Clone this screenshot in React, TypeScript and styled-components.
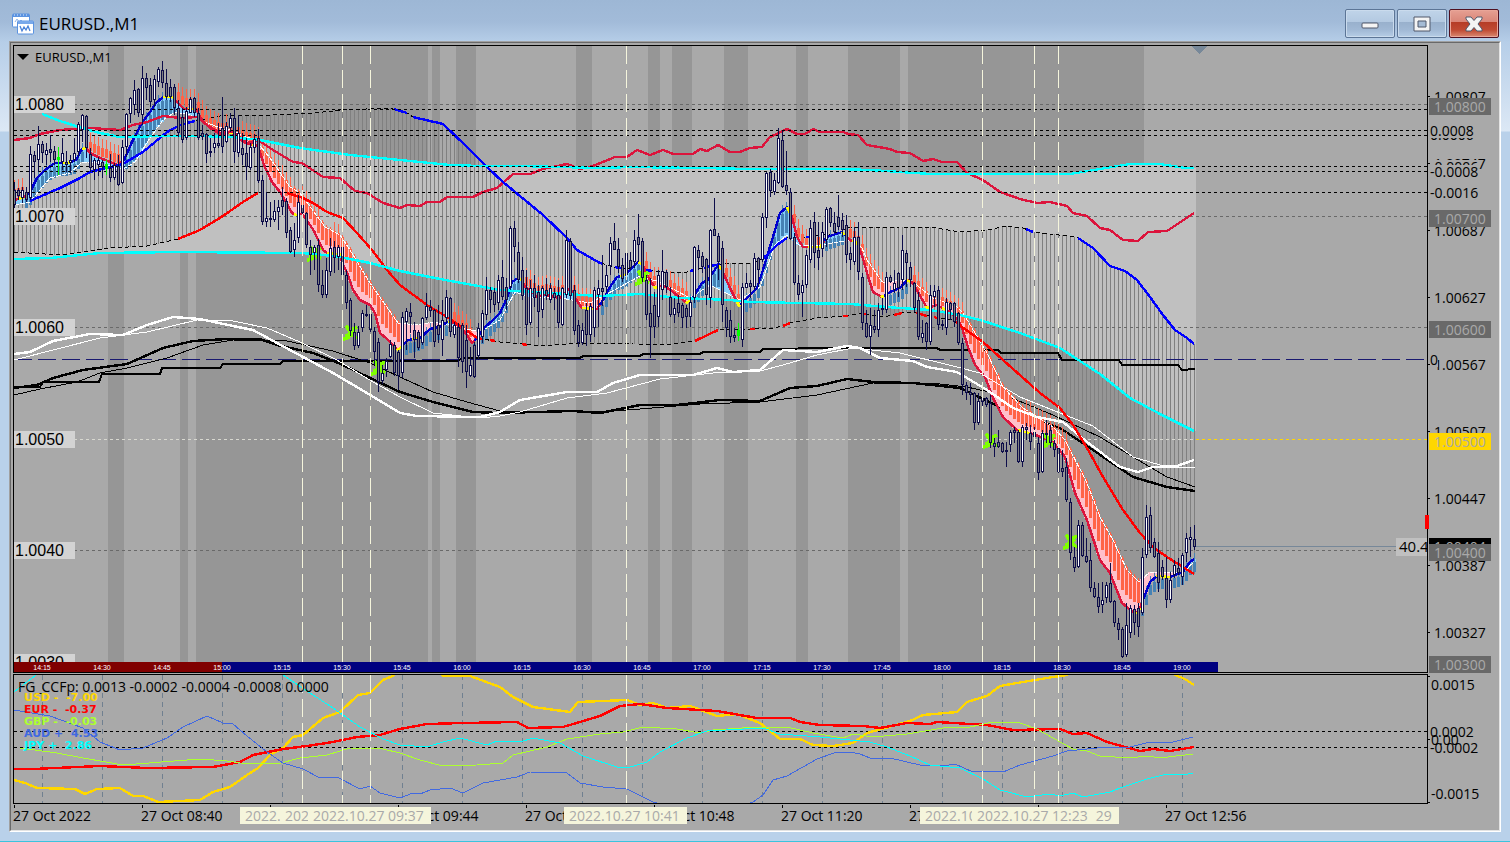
import React from "react";
import styled, { createGlobalStyle } from "styled-components";

/* ------------------------------------------------------------------ */
/* Types and chart data                                                */
/* ------------------------------------------------------------------ */

type Point = [number, number];

const parse = (s: string): Point[] =>
  s.trim().split(/\s+/).map((p) => p.split(",").map(Number) as Point);

const at = (pts: Point[], x: number): number => {
  if (x <= pts[0][0]) return pts[0][1];
  for (let i = 1; i < pts.length; i++) {
    if (x <= pts[i][0]) {
      const [x0, y0] = pts[i - 1];
      const [x1, y1] = pts[i];
      return y0 + ((y1 - y0) * (x - x0)) / (x1 - x0 || 1);
    }
  }
  return pts[pts.length - 1][1];
};

const FIRST = 14;
const STEP = 4;
const LAST = 1194;
const ORIGIN = 46;
const SUB_ORIGIN = 675;

const slice = (pts: Point[], from: number, to: number): Point[] => [
  [from, at(pts, from)],
  ...pts.filter((p) => p[0] > from && p[0] < to),
  [to, at(pts, to)],
];

const join = (pts: Point[]) => pts.map((p) => `${p[0]},${Math.round(p[1])}`).join(" ");

/* high, low, body top, body bottom; one entry for every minute, ten to a row */
const CANDLES = `
182 210 190 205 d;188 200 190 196 d;187 203 190 198 u;187 202 192 200 d;146 200 154 198 u;151 178 155 162 d;126 172 144 160 u;141 163 144 153 d;143 165 150 155 u;135 162 149 153 d;
146 165 151 160 d;147 175 157 160 g;138 170 153 162 u;151 172 162 165 d;155 173 160 163 u;138 162 153 160 u;122 157 124 152 u;114 142 115 130 u;115 158 116 148 d;148 172 154 168 d;
158 180 160 170 u;157 176 160 165 u;160 178 162 167 d;160 175 164 169 g;154 182 168 178 d;163 180 165 178 u;155 186 166 185 d;140 184 147 183 u;113 157 114 147 u;97 123 98 114 u;
80 115 90 105 u;88 117 89 113 d;66 125 78 115 u;73 100 78 88 d;78 107 85 102 d;75 107 79 100 u;67 87 69 82 u;61 88 70 83 d;69 100 83 97 d;79 102 87 97 d;
84 115 87 108 d;100 137 108 133 d;108 143 117 140 d;107 140 111 138 u;97 113 99 113 u;97 117 98 113 d;108 140 113 138 d;125 140 133 137 d;133 163 134 154 d;138 157 151 153 u;
133 153 143 148 u;123 148 143 146 d;97 153 128 147 d;122 143 126 142 u;113 132 118 128 u;108 163 118 152 d;115 157 133 153 u;133 165 148 155 d;138 180 153 167 d;143 170 147 168 u;
134 153 139 148 u;129 183 138 181 d;175 225 180 222 d;192 227 218 222 u;202 227 218 220 d;200 222 211 220 u;200 230 207 212 u;187 215 200 207 d;198 238 201 233 d;227 253 230 252 d;
223 257 240 250 u;195 243 202 238 u;202 222 205 213 d;212 248 213 245 d;240 275 247 255 d;245 270 247 253 u;239 292 245 285 d;270 298 285 295 d;258 298 270 295 u;238 276 248 272 u;
241 273 247 258 d;245 270 247 257 u;245 276 247 275 d;270 309 275 303 d;298 336 300 331 d;323 350 332 346 d;326 348 332 346 u;310 332 313 328 u;305 317 314 316 d;310 332 314 330 d;
327 365 331 352 d;338 392 342 382 d;365 384 373 381 u;358 377 361 370 u;340 358 344 357 u;342 376 345 373 d;350 390 352 376 d;312 378 317 373 u;308 350 311 322 u;303 333 312 317 d;
322 358 330 340 d;330 350 332 348 d;317 345 318 343 u;293 320 306 318 u;300 317 307 311 d;309 347 310 342 d;305 343 325 335 d;300 356 320 340 u;290 323 297 318 u;297 337 298 332 d;
322 338 325 335 u;323 367 327 358 d;323 373 325 362 d;325 388 340 372 d;347 377 365 376 u;342 378 345 377 d;323 360 328 356 u;310 343 313 337 u;277 320 290 315 u;287 313 290 300 d;
288 312 292 305 d;275 310 280 303 u;260 300 277 297 d;278 310 287 300 d;226 290 228 287 u;221 262 228 247 d;242 283 252 280 d;257 300 270 296 d;270 335 288 325 d;280 325 288 323 u;
275 307 288 298 d;285 337 292 312 d;286 318 288 310 u;278 300 290 296 d;283 303 288 300 u;288 310 293 298 d;280 328 295 323 d;287 326 288 325 u;230 298 240 295 u;238 300 241 296 d;
285 335 290 331 d;320 347 325 343 d;323 345 330 343 u;303 346 310 335 d;303 342 306 335 u;287 337 290 328 u;280 327 288 295 u;255 306 288 292 d;265 293 275 287 u;237 275 243 266 u;
223 250 241 250 d;238 273 249 267 d;258 282 265 279 d;245 278 253 275 u;252 270 260 268 d;230 268 240 262 u;214 262 237 245 d;238 282 241 278 d;275 320 280 315 d;278 358 313 327 d;
292 338 305 327 d;270 327 275 317 u;250 300 271 290 u;270 293 272 287 d;287 317 297 315 d;298 323 308 315 u;295 317 303 313 d;303 328 305 318 d;305 328 308 317 d;297 327 302 317 u;
246 303 247 298 u;245 270 250 258 d;252 273 256 267 d;258 305 259 295 d;229 308 230 298 u;198 236 229 236 d;233 280 236 262 d;241 322 248 305 d;307 337 310 328 d;310 343 320 337 d;
328 342 335 338 d;323 341 330 336 g;283 347 287 340 u;273 288 283 288 u;280 298 283 287 d;253 290 258 287 u;257 287 258 270 d;213 262 217 260 u;172 228 173 218 u;169 197 172 191 d;
173 195 180 192 u;128 184 138 183 u;131 188 140 187 d;151 195 185 191 d;188 240 192 239 d;233 285 237 283 d;275 300 283 295 d;280 317 285 293 u;250 288 255 285 u;220 263 228 260 u;
212 268 222 253 d;222 270 250 258 d;222 257 232 249 u;207 247 209 240 u;207 227 208 223 d;212 233 223 232 d;195 230 217 227 d;213 237 220 230 d;215 263 225 255 d;247 270 253 260 d;
227 265 237 262 u;222 280 237 272 d;273 330 277 323 d;310 338 323 337 d;308 355 325 337 u;310 333 326 330 d;303 337 310 330 u;298 315 308 310 u;272 313 277 310 u;275 283 277 282 d;
270 293 283 290 u;272 297 273 288 d;235 290 250 280 u;250 287 253 263 d;262 287 267 280 d;282 312 283 308 d;292 340 300 337 d;320 343 333 338 u;322 350 323 342 d;285 345 295 342 u;
285 307 291 297 u;286 330 290 325 d;320 330 324 326 d;298 335 302 328 u;302 320 303 310 d;302 327 303 322 d;312 345 313 343 d;338 395 343 385 d;382 400 385 393 d;383 405 392 395 d;
392 430 393 423 d;393 425 401 423 u;397 410 398 402 d;397 407 398 405 d;395 448 403 443 d;438 457 443 447 d;430 448 442 447 d;442 453 443 452 d;442 467 450 452 d;430 452 432 445 u;
427 443 430 433 d;430 463 432 462 d;425 467 427 462 u;423 440 427 430 d;425 450 433 442 d;427 443 432 437 u;437 480 443 473 d;430 473 433 472 u;420 443 433 435 d;425 448 430 443 d;
440 457 443 450 d;445 473 448 472 d;450 477 468 472 d;458 502 467 500 d;498 560 502 553 d;547 572 557 568 d;520 568 525 567 u;522 557 525 556 d;538 563 556 562 d;543 592 560 588 d;
582 598 588 597 d;583 613 597 607 d;582 613 600 605 u;582 603 585 598 u;563 603 583 602 d;600 627 601 623 d;618 640 623 630 d;627 658 629 657 d;603 657 625 655 u;605 638 608 633 u;
605 635 609 623 d;603 637 608 627 d;548 615 557 613 u;505 558 517 555 u;507 553 515 548 d;538 558 542 557 d;542 592 553 583 d;560 580 567 577 d;557 608 578 600 d;572 603 580 600 u;
560 578 565 575 u;558 575 568 573 d;553 585 555 577 u;533 562 538 553 u;527 557 537 540 u;525 550 539 547 d`
  .split(";")
  .map((row, i) => {
    const [high, low, top, bottom, kind] = row.trim().split(" ");
    return { x: FIRST + i * STEP, high: +high, low: +low, top: +top, bottom: +bottom, kind };
  });

const FAST = parse(`14,200 22,198 30,192 37,178 45,170 55,163 68,163 76,160 82,149 86,148 90,153 100,158 110,162 118,165 124,160
132,142 142,123 150,112 156,103 163,97 172,97 178,103 184,109 196,109 202,120 210,128 220,134 232,133 245,143 258,146 264,165
272,182 280,192 286,202 292,213 296,215 302,214 308,222 314,231 323,250 327,253 340,254 342,262 348,275 353,290 360,300 370,305
375,313 380,333 387,339 398,350 403,345 408,340 420,338 430,329 440,327 447,322 452,322 460,327 467,335 472,343 477,338 485,327
493,320 500,313 507,298 512,282 518,278 522,280 525,287 530,290 537,297 545,295 560,298 570,288 575,298 582,308 597,309 603,300
610,287 617,277 625,275 638,262 643,265 648,277 655,288 663,285 673,292 687,303 693,297 702,283 708,280 718,265 722,270 730,288
739,306 745,300 757,288 763,270 768,253 773,237 780,213 787,207 792,217 797,237 803,247 820,247 827,237 842,232 850,240 857,243
862,255 867,273 873,292 882,297 890,292 900,288 907,280 913,283 927,308 937,305 950,312 958,320 962,328 968,347 975,365 985,377
993,398 1003,417 1017,430 1033,434 1053,442 1065,457 1075,493 1087,520 1100,560 1110,573 1122,603 1133,612 1138,613 1143,600
1150,582 1157,576 1170,577 1183,572 1190,562 1194,559`);

const SLOW = parse(`14,205 30,202 50,178 70,173 82,162 100,162 115,168 125,168 135,162 150,138 163,120 175,112 190,115 200,120
215,126 230,130 255,140 270,158 290,187 300,193 325,227 340,235 350,250 370,283 398,323 417,325 433,322 450,325 480,332 500,320
515,292 530,297 560,298 590,303 620,287 640,276 660,282 690,298 710,285 740,300 760,287 775,245 787,235 800,246 820,245 850,240
862,248 867,260 883,283 900,280 913,282 933,298 957,307 963,313 987,353 1003,387 1023,408 1053,427 1065,440 1087,483 1100,517
1113,540 1127,570 1139,582 1150,572 1167,572 1183,572 1194,562`);

const CYAN_TOP = parse(`42,114 60,121 82,128 100,133 120,137 160,136 200,136 230,137 260,140 300,148 350,155 400,160 450,165 480,166
520,166 600,168 630,167 700,168 750,169 780,169 840,169 870,170 930,174 1070,174 1100,169 1130,164 1160,164 1185,168 1194,168`);
const CYAN_BOTTOM = parse(`14,259 50,258 100,253 180,252 300,253 315,254 340,257 370,263 400,271 440,279 500,290 550,293 600,296
640,294 680,298 730,300 750,302 850,304 900,308 930,310 960,315 980,320 1020,333 1060,348 1100,374 1130,398 1160,414 1194,431`);

const ENV_TOP = parse(`14,204 30,201 60,188 80,178 90,172 123,164 143,152 167,132 180,125 195,121 220,116 273,115 313,113 343,110
390,108 407,113 413,117 443,124 467,147 487,167 503,182 543,215 567,238 577,250 600,263 618,268 647,270 660,272 687,272 707,267
727,263 750,263 760,260 767,255 777,245 787,238 807,237 833,234 847,228 900,227 930,227 960,232 987,230 1007,226 1023,228
1033,232 1050,234 1077,237 1093,248 1110,266 1125,271 1137,280 1150,297 1163,315 1175,330 1187,338 1194,344`);
const ENV_BOTTOM = parse(`14,252 60,255 110,248 147,246 178,239 200,230 220,218 243,202 258,193 283,192 303,198 313,203 327,212
343,218 357,233 372,250 387,270 400,285 427,305 447,317 462,327 477,338 500,342 543,346 580,343 633,344 673,344 695,341 718,330
752,329 773,328 783,326 790,323 817,318 847,316 860,313 883,317 907,312 917,313 933,317 953,320 962,327 983,342 1003,360
1040,393 1060,408 1073,425 1087,448 1103,477 1123,510 1140,533 1153,547 1167,557 1194,574`);

const CRIMSON = parse(`14,140 30,138 40,134 60,130 90,128 120,130 133,125 147,122 163,116 180,118 197,117 207,125 220,133 233,132
247,143 258,140 273,150 293,162 302,163 323,177 340,178 355,191 367,193 383,203 400,208 407,205 420,206 427,202 440,202 447,197
473,197 483,192 497,188 513,174 530,174 543,169 567,164 580,169 593,166 615,157 627,157 637,150 650,155 663,150 673,154 693,154
700,149 707,151 718,145 730,152 740,152 750,148 762,147 770,137 787,129 797,134 805,134 813,129 820,132 843,132 848,134 858,135
867,145 890,149 897,152 910,153 923,161 933,159 942,162 957,162 967,173 983,180 1000,192 1020,199 1037,203 1050,202 1067,206
1073,213 1087,216 1100,228 1110,230 1123,240 1138,241 1148,232 1167,231 1194,213`);

const STEPS = parse(`14,387 40,387 43,382 99,382 102,374 160,374 162,368 220,368 223,364 280,364 283,361 457,361 463,358 580,358
583,356 640,356 643,354 700,354 703,352 760,352 763,349 833,348 937,348 940,350 998,350 1001,353 1058,353 1062,360 1119,360
1122,365 1178,365 1182,370 1195,369`);
const BLACK_THICK = parse(`14,388 37,385 53,378 83,370 127,364 163,348 193,341 227,339 260,339 277,345 313,353 343,365 370,378
400,392 433,402 473,412 500,413 573,411 600,413 640,405 677,405 720,400 760,401 790,388 817,386 847,379 873,382 913,383 960,388
1000,407 1020,415 1060,428 1093,450 1133,477 1167,487 1195,491`);
const BLACK_THIN = parse(`14,395 40,389 77,382 100,373 127,368 167,358 203,345 233,340 287,341 333,351 370,363 400,377 433,392
467,402 500,411 600,412 640,409 700,404 760,402 817,395 873,383 940,384 967,387 1007,396 1053,415 1100,437 1133,457 1167,477 1195,487`);
const WHITE_THICK = parse(`14,354 30,352 53,341 90,334 123,335 147,325 173,317 200,319 233,326 253,330 290,350 333,373 367,393
400,413 417,416 480,417 500,412 520,400 567,392 597,392 613,383 640,375 693,375 717,368 733,372 760,370 783,350 817,352 847,346
860,348 880,358 913,361 927,367 957,372 987,390 1013,408 1037,417 1063,422 1087,442 1120,467 1138,472 1153,467 1177,466 1194,460`);
const WHITE_THIN = parse(`14,360 100,338 147,332 197,320 233,321 267,328 300,342 337,360 373,382 400,397 433,413 480,418 500,416
520,412 567,398 607,393 660,379 713,373 760,371 783,365 817,355 853,348 900,353 957,367 980,373 1020,397 1060,413 1093,426
1133,457 1167,467 1195,467`);

const SUB_USD = parse(`14,780 25,783 37,788 75,789 85,794 97,789 120,788 133,796 143,796 158,802 200,800 213,792 230,787 247,775
258,768 270,755 283,748 293,737 303,735 323,718 340,712 358,695 370,693 383,680 393,676 400,670 436,670 443,676 470,676 500,687
513,697 533,707 570,712 578,702 627,700 640,705 653,703 667,708 690,706 717,716 737,714 760,723 780,739 800,739 813,745 833,746
853,743 867,733 910,721 923,715 957,712 967,702 987,696 1000,686 1017,683 1053,677 1067,675 1075,670 1170,670 1175,675 1185,679 1194,685`);
const SUB_EUR = parse(`14,769 33,769 100,766 147,768 213,767 240,762 253,755 283,749 307,746 333,742 357,737 380,735 400,729
427,724 463,723 517,722 528,728 563,727 600,716 620,706 640,704 667,708 717,711 757,718 790,718 800,722 820,725 863,726 880,728
907,723 930,724 937,722 987,725 1013,730 1060,729 1073,734 1087,733 1107,742 1140,751 1153,749 1170,751 1194,747`);
const SUB_GBP = parse(`20,748 57,753 83,758 123,765 200,759 227,761 240,763 277,764 300,758 327,755 350,748 383,749 400,753
420,760 443,766 477,765 503,763 513,755 547,747 567,739 600,734 623,732 643,727 677,729 700,733 713,730 757,727 787,727 813,733
843,738 853,734 873,737 907,734 943,728 970,727 993,722 1020,723 1037,729 1053,738 1073,749 1087,751 1100,756 1130,758 1147,756 1160,758 1193,754`);
const SUB_AUD = parse(`14,710 50,716 83,728 100,742 120,750 143,748 167,738 183,727 207,716 223,723 233,724 247,736 267,752 283,763
303,769 320,778 337,777 360,789 370,786 380,793 400,798 413,793 420,794 430,790 450,788 463,793 483,783 517,777 530,772 567,773
580,783 603,787 627,789 653,802 670,806 740,806 753,802 763,795 773,780 787,776 817,759 837,752 850,752 860,754 870,758 890,758
920,765 943,766 955,764 973,772 983,771 1003,772 1020,765 1053,756 1067,751 1107,747 1130,747 1150,742 1173,742 1193,737`);
const SUB_JPY = parse(`14,692 36,675 42,665 275,665 283,675 310,693 333,708 360,727 383,739 400,745 427,747 443,742 460,738 487,745
497,741 520,742 533,738 560,743 583,756 617,767 627,768 647,762 660,752 687,738 707,731 763,728 780,734 820,737 870,742 887,747
910,756 930,765 960,768 983,779 1000,790 1027,797 1050,794 1060,796 1073,793 1083,797 1110,792 1120,788 1147,779 1167,774 1183,775 1193,773`);

const DARK_BANDS: Point[] = [
  [108, 124], [180, 188], [196, 428], [432, 440], [456, 476], [576, 592], [648, 660],
  [672, 692], [724, 748], [796, 808], [848, 900], [908, 1144],
];
const BLUE_TOP: Point[] = [[30, 195], [394, 407], [413, 603], [615, 624], [646, 652], [690, 694], [704, 720], [762, 787], [806, 811], [1026, 1033], [1078, LAST]];
const RED_BOTTOM: Point[] = [[178, 258], [287, 462], [466, 482], [490, 495], [522, 527], [695, 718], [750, 755], [783, 790], [843, 848], [864, 867], [894, 902], [916, 927], [934, 937], [956, LAST]];
const RISING: Point[] = [[26, 84], [122, 174], [400, 448], [474, 522], [600, 640], [690, 718], [740, 790], [824, 846], [884, 908], [1142, LAST]];
const YELLOW: Point[] = [[18, 24], [62, 70], [82, 86], [163, 174], [188, 194], [228, 233], [252, 256], [294, 300], [327, 341], [397, 401], [412, 418], [448, 451], [519, 523], [582, 596], [620, 625], [638, 642], [654, 659], [686, 690], [718, 722], [737, 740], [787, 790], [808, 822], [842, 845], [852, 858], [881, 884], [907, 910], [926, 930], [942, 948], [1018, 1032], [1136, 1140], [1156, 1170]];
const EVENT_LINES = [302, 342, 370, 626, 982, 1034, 1058];
const MARKS: Point[] = [[314, 254], [350, 333], [378, 368], [642, 278], [990, 441], [1048, 441], [1070, 542]];
const BARS = CANDLES.map((c) => c.x);
const isRising = (x: number) => RISING.some(([a, b]) => x >= a && x <= b);

/* ------------------------------------------------------------------ */
/* Styled parts                                                        */
/* ------------------------------------------------------------------ */

const GlobalStyle = createGlobalStyle`
  * { box-sizing: border-box; }
  body { margin: 0; background: #b9d1ea; }
`;

const UI = `"Open Sans", "Noto Sans", sans-serif`;
const ARIAL = `"Liberation Sans", Arial, sans-serif`;

const Window = styled.main`
  display: flex;
  flex-direction: column;
  min-height: 100vh;
  padding: 0 9px 9px 9px;
  border-bottom: 1px solid #3cc3dd;
  background: linear-gradient(#9db7d5 0, #a2bbd9 22px, #b6cee8 42px, #dce8f5 131px, #b9d1ea 132px);
  font-family: ${UI};
  font-size: 14px;
  color: #000;
`;

const TitleBar = styled.header`
  display: flex;
  align-items: center;
  gap: 5px;
  height: 41px;
  padding: 6px 2px 0 3px;
`;

const Title = styled.h1`
  flex: 1;
  margin: 0;
  font-size: 17px;
  font-weight: 400;
  line-height: 24px;
`;

const Buttons = styled.div`
  display: flex;
  gap: 2px;
  align-self: flex-start;
  padding-top: 3px;
`;

const CaptionButton = styled.button<{ $danger?: boolean }>`
  display: flex;
  align-items: center;
  justify-content: center;
  width: 50px;
  height: 29px;
  padding: 0;
  border: 1px solid ${(p) => (p.$danger ? "#4f1020" : "#5c7596")};
  border-radius: 2px;
  box-shadow: inset 0 0 0 1px ${(p) => (p.$danger ? "#e9a598" : "#cadbed")};
  background: ${(p) =>
    p.$danger
      ? "linear-gradient(#e6a093, #d98577 12px, #b53c26 12px, #c04a33 20px, #d98a72)"
      : "linear-gradient(#c0d4e9, #b3c9e1 12px, #98b0cc 12px, #a1b9d5 20px, #b6cde6)"};
`;

const Frame = styled.section`
  flex: 1;
  border: 1px solid;
  border-color: #a0a0a0 #fff #fff #a0a0a0;
`;

const Client = styled.div`
  display: grid;
  grid-template-columns: minmax(0, 1fr) 71px;
  grid-template-rows: 628px 130px 25px;
  row-gap: 1px;
  height: 100%;
  padding: 2px 0 0 2px;
  border: 1px solid;
  border-color: #696969 #e3e3e3 #e3e3e3 #696969;
  background: #a9a9a9;
`;

const Plot = styled.div`
  position: relative;
  display: flex;
  flex-direction: column;
  border: 1px solid #000;
  overflow: hidden;
`;

const Drawing = styled.svg`
  display: block;
  flex: 1;
  width: 100%;
  min-height: 0;
  shape-rendering: crispEdges;
`;

const PlotTitle = styled.div`
  position: absolute;
  top: 1px;
  left: 3px;
  display: flex;
  align-items: center;
  gap: 6px;
  font-size: 13px;
  line-height: 20px;
`;

const PriceTag = styled.div<{ $y: number }>`
  position: absolute;
  left: 0;
  top: ${(p) => p.$y - ORIGIN - 8}px;
  width: 61px;
  height: 17px;
  padding-left: 1px;
  background: #d3d3d3;
  font: 16px/17px ${ARIAL};
`;

const SpreadTag = styled.div`
  position: absolute;
  right: 0;
  top: 492px;
  width: 31px;
  height: 18px;
  padding-left: 3px;
  overflow: hidden;
  background: #c0c0c0;
  font-size: 15px;
  line-height: 17px;
`;

const TimeStrip = styled.ol`
  position: relative;
  display: flex;
  flex: none;
  width: 1204px;
  height: 10px;
  margin: 0;
  padding: 0;
  list-style: none;
  background: linear-gradient(to right, #800000 208px, #000080 208px);
  color: #fff;
  font: 7px/12px ${ARIAL};

  li {
    flex: none;
    width: 60px;
    text-align: center;
  }
  li:first-child { margin-left: -2px; }
`;

const Axis = styled.div`
  position: relative;
  display: grid;
  grid-template-rows: minmax(0, 1fr);
`;

const Scale = styled.ol`
  grid-area: 1 / 1;
  margin: 0;
  padding: 18px 0 0;
  list-style: none;

  li {
    display: flex;
    align-items: center;
    gap: 4px;
    height: 67px;
  }
  li::before {
    content: "";
    width: 2px;
    height: 1px;
    background: #000;
  }
`;

const SubTicks = styled.div`
  grid-area: 1 / 1;
  display: flex;
  flex-direction: column;
  justify-content: space-between;
  padding: 2px 0 1px;

  i {
    width: 2px;
    height: 1px;
    background: #000;
  }
`;

const SubScale = styled.ol`
  grid-area: 1 / 1;
  display: flex;
  flex-direction: column;
  justify-content: space-between;
  margin: 0;
  padding: 4px 0 3px 3px;
  list-style: none;
  line-height: 14px;
`;

const LevelLabel = styled.div<{ $y: number; $clear?: boolean }>`
  position: absolute;
  left: 2px;
  top: ${(p) => p.$y - 7}px;
  line-height: 14px;
  background: ${(p) => (p.$clear ? "none" : "#a9a9a9")};
`;

const AxisBadge = styled.div<{ $y: number; $fill: string }>`
  position: absolute;
  left: 1px;
  top: ${(p) => p.$y}px;
  width: 62px;
  height: 17px;
  padding-left: 5px;
  background: ${(p) => p.$fill};
  color: #a9a9a9;
  line-height: 17px;
`;

const RedMark = styled.div`
  position: absolute;
  left: -3px;
  top: 470px;
  width: 4px;
  height: 14px;
  background: #f00;
`;

const Legend = styled.div`
  position: absolute;
  top: 3px;
  left: 4px;
  line-height: 18px;
  white-space: pre;
`;

const Strengths = styled.ul`
  margin: -4px 0 0;
  padding: 0 0 0 6px;
  list-style: none;
  font: bold 11px/12px "DejaVu Sans", sans-serif;
`;

const Strength = styled.li<{ $color: string }>`
  color: ${(p) => p.$color};
`;

const TimeAxis = styled.div`
  position: relative;
  grid-column: 1 / -1;
  display: flex;
  overflow: hidden;
`;

const TimeLabel = styled.span`
  flex: none;
  width: 128px;
  line-height: 22px;
  background: linear-gradient(#000, #000) 1px 0 / 1px 3px no-repeat;
`;

const EventTag = styled.div<{ $x: number }>`
  position: absolute;
  left: ${(p) => p.$x - 75}px;
  top: 2px;
  width: 123px;
  height: 17px;
  padding-left: 5px;
  background: #f5f5dc;
  color: #a9a9a9;
  line-height: 17px;
  white-space: nowrap;
`;

/* ------------------------------------------------------------------ */
/* Drawings                                                            */
/* ------------------------------------------------------------------ */

const THICK = 2.4;

const Line = ({ pts, color, width = THICK, dash }: { pts: Point[]; color: string; width?: number; dash?: string }) => (
  <polyline points={join(pts)} fill="none" stroke={color} strokeWidth={width} strokeDasharray={dash} strokeLinejoin="round" />
);

const Level = ({ y, color, dash, from = 14 }: { y: number; color: string; dash?: string; from?: number }) => (
  <line x1={from} x2={5000} y1={y + 0.5} y2={y + 0.5} stroke={color} strokeDasharray={dash} />
);

const ChartIcon = () => (
  <svg width="22" height="22" viewBox="0 0 22 22" aria-hidden="true">
    <rect x="0.5" y="1" width="17" height="13" rx="1" fill="#fff" stroke="#5b93e0" />
    <rect x="1" y="1" width="16" height="3" fill="#5b93e0" />
    <path d="M2 2h1M5 2h1M8 2h1M11 2h1M14 2h1" stroke="#dbe9fb" />
    <path d="M3 9l2-3 2 3 2-2 2 2" fill="none" stroke="#8fb4ea" />
    <rect x="5.5" y="8" width="16" height="13" rx="1" fill="#fff" stroke="#5b93e0" />
    <rect x="6" y="8" width="15" height="3" fill="#78a8ea" />
    <path d="M8 13l2 5 2-4 2 3 2-4 2 5" fill="none" stroke="#4a82d8" strokeWidth="1.3" />
  </svg>
);

const Candles = () => (
  <g>
    {CANDLES.map(({ x, high, low, top, bottom, kind }) => {
      const edge = kind === "g" ? "#00ff00" : "#0d0d4a";
      const fill = kind === "u" ? "#ffffff" : kind === "g" ? "#00ff00" : "#808080";
      return (
        <g key={x}>
          <rect x={x} y={high} width={1} height={low - high} fill={edge} />
          <rect x={x - 1} y={top} width={3} height={Math.max(1, bottom - top)} fill={edge} />
          {bottom - top > 2 && <rect x={x} y={top + 1} width={1} height={bottom - top - 2} fill={fill} />}
        </g>
      );
    })}
  </g>
);

const Ribbon = () => (
  <g>
    {BARS.map((x) => {
      const f = at(FAST, x);
      const s = at(SLOW, x);
      const up = isRising(x);
      const y = Math.round(Math.min(f, s));
      const h = Math.round(Math.abs(s - f));
      const falling = f > s ? s + (f - s) * 0.7 : f - 2;
      const top = Math.round(up ? f + 3 : Math.min(falling - 9, s - 1));
      const size = Math.round(up ? Math.max(10, (s - f) * 0.8) : Math.max(9, falling - top));
      const wick = !up && h > 22 ? 2 : 9;
      const color = up ? "#4682b4" : "#ff6347";
      return (
        <g key={x}>
          <rect x={x - 2} y={y} width={4} height={h} fill={f > s ? "#ffc0cb" : "#87cefa"} />
          <rect x={x} y={top - wick} width={1} height={size + wick} fill={color} />
          <rect x={x - 1} y={top} width={3} height={size} fill={color} />
        </g>
      );
    })}
    <Line pts={SLOW} color="#fff" width={1} dash="5 1" />
    <Line pts={FAST} color="#dc143c" />
    {RISING.map(([a, b]) => (
      <Line key={a} pts={slice(FAST, a, b)} color="#0000cd" />
    ))}
    {YELLOW.map(([a, b]) => (
      <Line key={a} pts={slice(FAST, a, b)} color="#ffff00" />
    ))}
  </g>
);

const Mark = ({ x, y }: { x: number; y: number }) => (
  <path
    transform={`translate(${x} ${y})`}
    d="M-4 -7Q0 -3 0 0Q0 5 -7 6M7 -6Q2 -4 2 -1Q2 3 7 5M-5 3L0 2M1 0L5 -3"
    fill="none"
    stroke="#7fff00"
    strokeWidth="4"
  />
);

const MainDrawing = () => {
  const ceiling: Point[] = [...slice(CRIMSON, 14, 100), ...slice(CYAN_TOP, 120, LAST), [LAST + 2, 168]];
  const floor: Point[] = [...CYAN_BOTTOM, [LAST + 2, 431]];
  return (
    <Drawing role="img" aria-label="EURUSD one minute candles with moving averages">
      <g transform={`translate(-14 ${-ORIGIN})`}>
        {DARK_BANDS.map(([a, b]) => (
          <rect key={a} x={a} y={46} width={b - a} height={616} fill="#969696" />
        ))}
        <polygon points={join([...ceiling, ...floor.slice().reverse()])} fill="#c0c0c0" />
        {BARS.map((x) => (
          <line key={x} x1={x + 0.5} x2={x + 0.5} y1={Math.round(at(ENV_TOP, x))} y2={Math.round(at(ENV_BOTTOM, x))} stroke="#808080" />
        ))}
        {[104, 216, 327, 550, 662].map((y) => (
          <Level key={y} y={y} color="#696969" dash="3 3" />
        ))}
        <Level y={439} color="#d8d8d0" dash="3 3" />
        <Level y={439} color="#ffd700" dash="3 3" from={1196} />
        <Level y={359} color="#191970" dash="18 6" />
        <Level y={546} color="#778899" from={1196} />

        <Line pts={ENV_TOP} color="#000" width={1} dash="4 3" />
        <Line pts={ENV_BOTTOM} color="#000" width={1} dash="4 3" />
        <Line pts={STEPS} color="#000" width={2} />
        <Line pts={BLACK_THIN} color="#000" width={1} />
        <Line pts={BLACK_THICK} color="#000" />
        <Ribbon />
        <Line pts={WHITE_THIN} color="#fff" width={1} />
        <Line pts={WHITE_THICK} color="#fff" />
        <Line pts={CRIMSON} color="#dc143c" />
        {MARKS.map(([x, y]) => (
          <Mark key={x} x={x} y={y} />
        ))}
        {BLUE_TOP.map(([a, b]) => (
          <Line key={a} pts={slice(ENV_TOP, a, b)} color="#0000ff" />
        ))}
        {RED_BOTTOM.map(([a, b]) => (
          <Line key={a} pts={slice(ENV_BOTTOM, a, b)} color="#ff0000" />
        ))}
        <Line pts={CYAN_TOP} color="#00ffff" />
        <Line pts={CYAN_BOTTOM} color="#00ffff" />
        {[109, 130, 135, 166, 171, 192].map((y) => (
          <Level key={y} y={y} color="#000" dash="3 3" />
        ))}
        <Candles />
        {EVENT_LINES.map((x) => (
          <line key={x} x1={x + 0.5} x2={x + 0.5} y1={46} y2={662} stroke="#f5f5dc" strokeDasharray="18 6" />
        ))}
        <path d="M1191 46h16l-8 8z" fill="#778899" />
      </g>
    </Drawing>
  );
};

const SubDrawing = () => (
  <Drawing role="img" aria-label="Currency strength lines">
    <g transform={`translate(-14 ${-SUB_ORIGIN})`}>
      {Array.from({ length: 20 }, (_, i) => 42 + i * 60).map((x) => (
        <line key={x} x1={x + 0.5} x2={x + 0.5} y1={675} y2={803} stroke="#708090" strokeDasharray="5 4" />
      ))}
      <Level y={731} color="#000" dash="3 3" />
      <Level y={747} color="#000" dash="3 3" />
      <Line pts={SUB_USD} color="#ffd700" />
      <Line pts={SUB_EUR} color="#ff0000" />
      <Line pts={SUB_GBP} color="#adff2f" width={1} />
      <Line pts={SUB_AUD} color="#4169e1" width={1} />
      <Line pts={SUB_JPY} color="#00ffff" width={1} />
      {EVENT_LINES.map((x) => (
        <line key={x} x1={x + 0.5} x2={x + 0.5} y1={675} y2={803} stroke="#f5f5dc" strokeDasharray="18 6" />
      ))}
    </g>
  </Drawing>
);

/* ------------------------------------------------------------------ */
/* Labels                                                              */
/* ------------------------------------------------------------------ */

const PRICE_TAGS: [string, number][] = [
  ["1.0080", 104], ["1.0070", 216], ["1.0060", 327], ["1.0050", 439], ["1.0040", 550], ["1.0030", 662],
];
const SCALE = ["1.00807", "1.00747", "1.00687", "1.00627", "1.00567", "1.00507", "1.00447", "1.00387", "1.00327"];
const LEVELS: [string, number][] = [
  ["0.0006", 135], ["0.0008", 131], ["-0.0006", 167], ["-0.0008", 172], ["-0.0016", 193], ["0", 360],
];
const BADGES: [string, number, string][] = [
  ["1.00800", 98, "#696969"], ["1.00700", 210, "#696969"], ["1.00600", 321, "#696969"],
  ["1.00500", 433, "#ffd700"], ["1.00404", 538, "#000"], ["1.00400", 544, "#696969"], ["1.00300", 656, "#696969"],
];
const STRIP = ["14:15", "14:30", "14:45", "15:00", "15:15", "15:30", "15:45", "16:00", "16:15", "16:30", "16:45",
  "17:00", "17:15", "17:30", "17:45", "18:00", "18:15", "18:30", "18:45", "19:00"];
const TIMES = ["27 Oct 2022", "27 Oct 08:40", "27 Oct 09:12", "27 Oct 09:44", "27 Oct 10:16", "27 Oct 10:48",
  "27 Oct 11:20", "27 Oct 11:52", "27 Oct 12:24", "27 Oct 12:56"];
const EVENTS: [string, number][] = [
  ["2022.10.27 09:20", 302], ["2022.10.27 09:30", 342], ["2022.10.27 09:37", 370], ["2022.10.27 10:41", 626],
  ["2022.10.27 12:10", 982], ["2022.10.27 12:29", 1058], ["2022.10.27 12:23", 1034],
];
const STRENGTHS: [string, string][] = [
  ["USD -  -7.00", "#ffd700"], ["EUR -  -0.37", "#ff0000"], ["GBP -  -0.03", "#adff2f"],
  ["AUD +  4.53", "#4169e1"], ["JPY +  2.86", "#00ffff"],
];

export default function App() {
  return (
    <>
      <GlobalStyle />
      <Window>
        <TitleBar>
          <ChartIcon />
          <Title>EURUSD.,M1</Title>
          <Buttons>
            <CaptionButton aria-label="Minimize">
              <svg width="18" height="12" viewBox="0 0 18 12">
                <rect x="1" y="5" width="16" height="5" rx="1" fill="#f4f4f4" stroke="#51586a" />
              </svg>
            </CaptionButton>
            <CaptionButton aria-label="Maximize">
              <svg width="18" height="16" viewBox="0 0 18 16">
                <path d="M1 1h16v14h-16z" fill="#f4f4f4" stroke="#51586a" />
                <path d="M5 5h8v6h-8z" fill="#a5bbd4" stroke="#51586a" />
              </svg>
            </CaptionButton>
            <CaptionButton aria-label="Close" $danger>
              <svg width="18" height="16" viewBox="0 0 18 16">
                <path
                  d="M1 1h5l3 3.500 3-3.500h5v2l-4 5 4 5v2h-5l-3-3.500-3 3.500h-5v-2l4-5-4-5z"
                  fill="#f4f4f4"
                  stroke="#51586a"
                />
              </svg>
            </CaptionButton>
          </Buttons>
        </TitleBar>
        <Frame>
          <Client>
            <Plot>
              <MainDrawing />
              {PRICE_TAGS.map(([text, y]) => (
                <PriceTag key={text} $y={y}>{text}</PriceTag>
              ))}
              <PlotTitle>
                <svg width="12" height="6" viewBox="0 0 12 6" aria-hidden="true">
                  <path d="M0 0h12l-6 6z" />
                </svg>
                EURUSD.,M1
              </PlotTitle>
              <SpreadTag>40.4</SpreadTag>
              <TimeStrip>
                {STRIP.map((t) => (
                  <li key={t}>{t}</li>
                ))}
              </TimeStrip>
            </Plot>
            <Axis>
              <Scale>
                {SCALE.map((t) => (
                  <li key={t}>{t}</li>
                ))}
              </Scale>
              {LEVELS.map(([text, y]) => (
                <LevelLabel key={text} $y={y - 45}>{text}</LevelLabel>
              ))}
              {BADGES.map(([text, y, fill]) => (
                <AxisBadge key={text} $y={y - 45} $fill={fill}>{text}</AxisBadge>
              ))}
              <RedMark />
            </Axis>
            <Plot>
              <SubDrawing />
              <Legend>
                FG_CCFp: 0.0013 -0.0002 -0.0004 -0.0008 0.0000
                <Strengths>
                  {STRENGTHS.map(([text, color]) => (
                    <Strength key={text} $color={color}>{text}</Strength>
                  ))}
                </Strengths>
              </Legend>
            </Plot>
            <Axis>
              <SubTicks>
                <i />
                <i />
                <i />
              </SubTicks>
              <SubScale>
                <li>0.0015</li>
                <li>0.00</li>
                <li>-0.0015</li>
              </SubScale>
              <LevelLabel $y={58} $clear>0.0002</LevelLabel>
              <LevelLabel $y={74} $clear>-0.0002</LevelLabel>
            </Axis>
            <TimeAxis>
              {TIMES.map((t) => (
                <TimeLabel key={t}>{t}</TimeLabel>
              ))}
              {EVENTS.map(([text, x]) => (
                <EventTag key={text} $x={x}>{text}</EventTag>
              ))}
            </TimeAxis>
          </Client>
        </Frame>
      </Window>
    </>
  );
}
